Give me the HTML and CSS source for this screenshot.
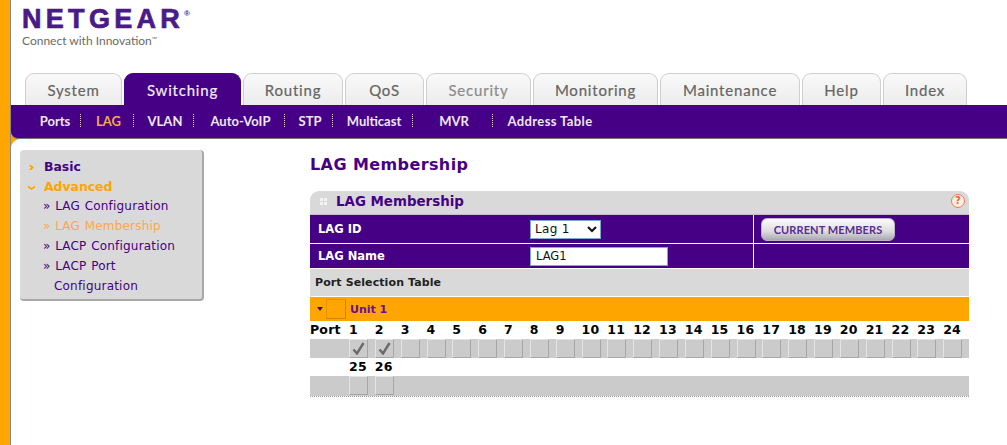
FILE: index.html
```html
<!DOCTYPE html>
<html lang="en">
<head>
<meta charset="utf-8">
<title>LAG Membership</title>
<link rel="stylesheet" href="styles.css">
</head>
<body>
<div class="page">
  <header class="top">
    <div class="logo">
      <div class="brand">NETGEAR<span class="reg">®</span></div>
      <div class="tagline">Connect with Innovation<span class="tm">™</span></div>
    </div>
    <nav class="tabs">
      <a class="tab t-system">System</a>
      <a class="tab t-switching active">Switching</a>
      <a class="tab t-routing">Routing</a>
      <a class="tab t-qos">QoS</a>
      <a class="tab t-security">Security</a>
      <a class="tab t-monitoring">Monitoring</a>
      <a class="tab t-maintenance">Maintenance</a>
      <a class="tab t-help">Help</a>
      <a class="tab t-index">Index</a>
    </nav>
  </header>
  <nav class="subnav">
    <a class="sub s-ports">Ports</a>
    <a class="sub s-lag current">LAG</a>
    <a class="sub s-vlan">VLAN</a>
    <a class="sub s-voip">Auto-VoIP</a>
    <a class="sub s-stp">STP</a>
    <a class="sub s-multi">Multicast</a>
    <a class="sub s-mvr">MVR</a>
    <a class="sub s-addr">Address Table</a>
  </nav>
  <main class="main">
    <aside class="side">
      <div class="side-head"><svg class="chev" width="7" height="7" viewBox="0 0 7 7"><path d="M1 1h2l3 2.500L3 6H1l2-2.500z"/></svg><span>Basic</span></div>
      <div class="side-head open"><svg class="chev" width="7" height="7" viewBox="0 0 7 7"><path d="M0 1.500v2L3.500 6 7 3.500v-2L3.500 4z"/></svg><span>Advanced</span></div>
      <a class="side-link">» LAG Configuration</a>
      <a class="side-link on">» LAG Membership</a>
      <a class="side-link">» LACP Configuration</a>
      <a class="side-link">» LACP Port<br><span class="wrap">Configuration</span></a>
    </aside>
    <section class="content">
      <h1 class="title">LAG Membership</h1>
      <div class="panel">
        <div class="panel-head">
          <span class="grip"><i></i><i></i><i></i><i></i></span>
          <span class="panel-title">LAG Membership</span>
          <span class="help">?</span>
        </div>
        <div class="form-row r-id">
          <label class="f-label">LAG ID</label>
          <div class="f-val"><select class="sel"><option>Lag 1</option></select></div>
          <div class="f-act"><button class="btn" type="button">CURRENT MEMBERS</button></div>
        </div>
        <div class="form-row r-name">
          <label class="f-label">LAG Name</label>
          <div class="f-val"><input class="inp" type="text" value="LAG1"></div>
          <div class="f-act"></div>
        </div>
        <div class="pst">Port Selection Table</div>
        <div class="unit">
          <svg class="tri" width="7" height="4" viewBox="0 0 7 4"><path d="M0 0h6L3 4z"/></svg>
          <span class="unit-box"></span>
          <span class="unit-name">Unit 1</span>
        </div>
        <div class="ports nums">
          <span class="port-h">Port</span><span>1</span><span>2</span><span>3</span><span>4</span><span>5</span><span>6</span><span>7</span><span>8</span><span>9</span><span>10</span><span>11</span><span>12</span><span>13</span><span>14</span><span>15</span><span>16</span><span>17</span><span>18</span><span>19</span><span>20</span><span>21</span><span>22</span><span>23</span><span>24</span>
        </div>
        <div class="ports boxes">
          <span></span>
          <span class="cb"><svg width="13" height="13" viewBox="0 0 13 13"><path d="M1.500 7.500 5 11.500 11.500 1" fill="none" stroke="#6a6a6a" stroke-width="2.400"/></svg></span>
          <span class="cb"><svg width="13" height="13" viewBox="0 0 13 13"><path d="M1.500 7.500 5 11.500 11.500 1" fill="none" stroke="#6a6a6a" stroke-width="2.400"/></svg></span>
          <span class="cb"></span><span class="cb"></span><span class="cb"></span><span class="cb"></span><span class="cb"></span><span class="cb"></span><span class="cb"></span><span class="cb"></span><span class="cb"></span><span class="cb"></span><span class="cb"></span><span class="cb"></span><span class="cb"></span><span class="cb"></span><span class="cb"></span><span class="cb"></span><span class="cb"></span><span class="cb"></span><span class="cb"></span><span class="cb"></span><span class="cb"></span><span class="cb"></span>
        </div>
        <div class="ports nums">
          <span></span><span>25</span><span>26</span>
        </div>
        <div class="ports boxes last">
          <span></span><span class="cb"></span><span class="cb"></span>
        </div>
      </div>
    </section>
  </main>
</div>
</body>
</html>
```

FILE: styles.css
```css
* { box-sizing: border-box; }
html, body { margin: 0; height: 100%; overflow: hidden; }
body {
  background: #ffa500;
  font-family: "DejaVu Sans", Verdana, sans-serif;
  color: #460085;
}
.page {
  margin-left: 10px;
  height: 100vh;
  display: flex;
  flex-direction: column;
  border-left: 1px solid #8a8a8a;
}
.top { background: #fff; height: 105px; display: flex; flex-direction: column; }

.logo { height: 73px; padding: 1px 0 0 11px; }
.brand {
  font-family: "Liberation Sans", Arial, sans-serif;
  font-weight: 700;
  font-size: 27px;
  line-height: 26px;
  letter-spacing: 4.300px;
  color: #4a1a86;
  -webkit-text-stroke: 0.7px #4a1a86;
}
.reg { font-size: 8px; letter-spacing: 0; vertical-align: 12px; -webkit-text-stroke: 0; }
.tagline {
  margin-top: 0;
  font-family: "Lato", sans-serif;
  font-size: 12px;
  line-height: 14px;
  color: #6a6a6a;
}
.tm { font-size: 7px; vertical-align: 3px; }

.tabs { display: flex; gap: 2px; padding-left: 14px; height: 32px; }
.tab {
  display: flex;
  align-items: center;
  justify-content: center;
  font-family: "Lato", sans-serif;
  font-size: 15px;
  letter-spacing: 0.8px;
  color: #656565;
  background: linear-gradient(#f9f9f9, #ececec);
  border: 1px solid #cfcfcf;
  border-bottom: 0;
  border-radius: 9px 9px 0 0;
  -webkit-text-stroke: 0.2px currentColor;
}
.tab.active {
  background: #460085;
  border-color: #460085;
  color: #f1ecf6;
}
.t-system { width: 97px; }
.t-switching { width: 117px; }
.t-routing { width: 100px; }
.t-qos { width: 79px; }
.t-security { width: 105px; color: #8b8b8b; }
.t-monitoring { width: 125px; }
.t-maintenance { width: 140px; }
.t-help { width: 79px; }
.t-index { width: 84px; }

.subnav {
  display: flex;
  align-items: center;
  height: 34px;
  padding: 0 0 2px 16px;
  background: #460085;
  border-bottom: 1px solid #777;
  border-bottom-left-radius: 7px;
}
.sub {
  display: flex;
  justify-content: center;
  height: 13px;
  align-items: center;
  padding-left: 3px;
  font-family: "Lato", sans-serif;
  font-weight: 700;
  font-size: 13px;
  color: #eee6f5;
  border-right: 1px dotted #d8d0e6;
}
.sub.current { color: #f3a94c; }
.s-ports { width: 54px; }
.s-lag { width: 53px; }
.s-vlan { width: 60px; }
.s-voip { width: 91px; }
.s-stp { width: 48px; }
.s-multi { width: 80px; }
.s-mvr { width: 80px; }
.s-addr { width: 114px; border-right: 0; padding-left: 0; letter-spacing: 0.4px; }

.main {
  flex: 1;
  background: #fff;
  border-top-left-radius: 9px;
  display: flex;
  align-items: flex-start;
  padding: 11px 0 0 9px;
}
.side {
  width: 184px;
  height: 151px;
  flex: none;
  background: #d9d9d9;
  border-right: 2px solid #a8a8a8;
  border-bottom: 2px solid #a8a8a8;
  border-radius: 4px;
  padding: 7px 0 0 8px;
  font-size: 12px;
  line-height: 20px;
}
.side-head {
  display: flex;
  align-items: center;
  font-weight: 700;
  font-size: 12.400px;
  line-height: 20px;
}
.chev { fill: #ffa500; margin-right: 8px; flex: none; }
.side-head span { display: block; padding-left: 1px; }
.side-head.open { color: #ffa500; margin-bottom: -1px; }
.side-link { display: block; padding-left: 15px; letter-spacing: 0.2px; word-spacing: 0.6px; }
.side-link.on { color: #ffa64d; }
.wrap { padding-left: 11px; }

.content { margin-left: 106px; width: 659px; flex: none; }
.title {
  margin: 4px 0 15px;
  font-size: 16px;
  line-height: 22px;
  font-weight: 700;
  letter-spacing: 0.4px;
}
.panel { border-bottom: 1px dotted #999; width: 659px; }
.panel-head {
  position: relative;
  height: 24px;
  display: flex;
  align-items: center;
  padding-bottom: 2px;
  background: #d9d9d9;
  border-top-left-radius: 9px;
  border-top-right-radius: 9px;
  border-bottom: 1px solid #c2bdc8;
}
.grip {
  display: grid;
  grid-template-columns: 3px 3px;
  gap: 1px;
  margin: 0 9px 0 10px;
}
.grip i { width: 3px; height: 3px; background: #f3f3f3; }
.panel-title { font-size: 13.400px; font-weight: 700; }
.help {
  position: absolute;
  right: 4px;
  top: 3px;
  width: 14px;
  height: 14px;
  border: 1.500px solid #f47a4a;
  border-radius: 50%;
  background: #fdeee6;
  color: #f0643a;
  font-size: 10px;
  font-weight: 700;
  line-height: 11px;
  text-align: center;
}
.form-row {
  display: grid;
  grid-template-columns: 220px 223px 1fr;
  align-items: stretch;
  background: #460085;
  border-bottom: 1px solid #fff;
  color: #fff;
}
.r-id { height: 29px; }
.r-name { height: 25px; }
.f-label {
  display: flex;
  align-items: center;
  padding-left: 8px;
  font-size: 11.500px;
  font-weight: 700;
}
.f-val { display: flex; align-items: center; }
.f-act {
  display: flex;
  align-items: center;
  padding-left: 7px;
  border-left: 1px solid #fff;
}
.sel {
  width: 71px;
  height: 19px;
  padding: 0;
  font: 12px "DejaVu Sans", Verdana, sans-serif;
  letter-spacing: 0.3px;
  color: #111;
  background: #fff;
  border: 1px solid #7fa6d6;
  border-radius: 0;
}
.inp {
  width: 138px;
  height: 19px;
  padding: 0 0 0 5px;
  font: 11.500px "DejaVu Sans", Verdana, sans-serif;
  color: #111;
  background: #fff;
  border: 1px solid #7fa6d6;
  border-radius: 0;
  outline: 0;
}
.btn {
  width: 134px;
  height: 23px;
  padding: 0;
  font-family: "Lato", sans-serif;
  font-weight: 700;
  font-size: 11px;
  letter-spacing: 0.1px;
  color: #5a2a96;
  background: linear-gradient(#fbfbfb, #dcdcdc 60%, #a8a8b0);
  border: 1px solid #b9b4c6;
  border-radius: 6px;
}
.pst {
  height: 28px;
  background: #d9d9d9;
  border-bottom: 1px solid #fff;
  padding-left: 5px;
  font-size: 11px;
  font-weight: 700;
  line-height: 27px;
  letter-spacing: 0.1px;
  color: #222;
}
.unit {
  height: 24px;
  background: #ffa500;
  display: flex;
  align-items: center;
  padding-left: 7px;
}
.tri { fill: #460085; flex: none; }
.unit-box {
  width: 20px;
  height: 20px;
  margin: 0 4px 0 2px;
  border: 1px solid #e59400;
  border-bottom-color: #c98300;
  border-right-color: #c98300;
  flex: none;
}
.unit-name { font-size: 11px; font-weight: 700; color: #6a0f9c; }
.ports {
  display: grid;
  grid-template-columns: 39px repeat(24, 1fr);
}
.nums {
  height: 18px;
  background: #fff;
  color: #000;
  font-size: 12.500px;
  font-weight: 700;
  line-height: 18px;
  letter-spacing: 0.2px;
}
.port-h { white-space: nowrap; }
.boxes { height: 19px; background: #cbcbcb; }
.boxes.last { height: 20px; }
.cb {
  width: 19px;
  height: 19px;
  display: flex;
  align-items: center;
  justify-content: center;
  background: #cbcbcb;
  border: 1px solid #e4e4e4;
  border-right-color: #a6a6a6;
  border-bottom-color: #a6a6a6;
}
```
